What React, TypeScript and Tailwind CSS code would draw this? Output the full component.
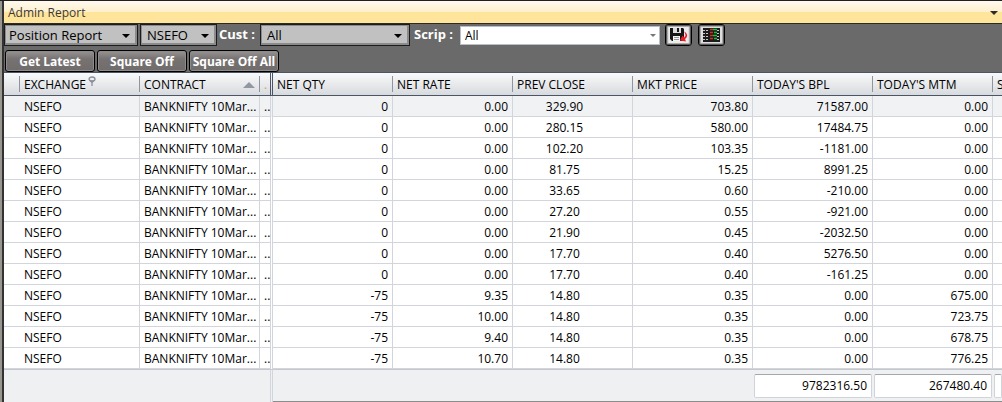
import React, { useState } from "react";
import clsx from "clsx";

interface Position {
  qty: string;
  rate: string;
  close: string;
  price: string;
  bpl: string;
  mtm: string;
}

const POSITIONS: Position[] = [
  { qty: "0", rate: "0.00", close: "329.90", price: "703.80", bpl: "71587.00", mtm: "0.00" },
  { qty: "0", rate: "0.00", close: "280.15", price: "580.00", bpl: "17484.75", mtm: "0.00" },
  { qty: "0", rate: "0.00", close: "102.20", price: "103.35", bpl: "-1181.00", mtm: "0.00" },
  { qty: "0", rate: "0.00", close: "81.75", price: "15.25", bpl: "8991.25", mtm: "0.00" },
  { qty: "0", rate: "0.00", close: "33.65", price: "0.60", bpl: "-210.00", mtm: "0.00" },
  { qty: "0", rate: "0.00", close: "27.20", price: "0.55", bpl: "-921.00", mtm: "0.00" },
  { qty: "0", rate: "0.00", close: "21.90", price: "0.45", bpl: "-2032.50", mtm: "0.00" },
  { qty: "0", rate: "0.00", close: "17.70", price: "0.40", bpl: "5276.50", mtm: "0.00" },
  { qty: "0", rate: "0.00", close: "17.70", price: "0.40", bpl: "-161.25", mtm: "0.00" },
  { qty: "-75", rate: "9.35", close: "14.80", price: "0.35", bpl: "0.00", mtm: "675.00" },
  { qty: "-75", rate: "10.00", close: "14.80", price: "0.35", bpl: "0.00", mtm: "723.75" },
  { qty: "-75", rate: "9.40", close: "14.80", price: "0.35", bpl: "0.00", mtm: "678.75" },
  { qty: "-75", rate: "10.70", close: "14.80", price: "0.35", bpl: "0.00", mtm: "776.25" },
];

const NUMBER_HEADS = ["NET QTY", "NET RATE", "PREV CLOSE", "MKT PRICE", "TODAY'S BPL", "TODAY'S MTM"];

function Arrow({ className }: { className: string }) {
  return (
    <svg viewBox="0 0 8 4" className={clsx("pointer-events-none absolute", className)} aria-hidden="true">
      <path d="M0 0h8L4 4z" fill="currentColor" />
    </svg>
  );
}

function Picker({ id, label, value, className, inset }: { id: string; label?: string; value: string; className: string; inset: string }) {
  return (
    <div className={clsx("relative shrink-0", className)}>
      <select
        id={id}
        aria-label={label}
        defaultValue={value}
        className={clsx(
          "block h-[22px] w-full appearance-none border border-[#1c1c1c] bg-[#c1c1c1] text-[13px] leading-5 text-black shadow-[inset_-1px_-1px_0_1px_#8b8b8b,inset_1px_1px_0_#8b8b8b] outline-none",
          inset
        )}
      >
        <option>{value}</option>
      </select>
      <Arrow className="right-2 top-[10px] h-1 w-2 text-black" />
    </div>
  );
}

function ToolButton({ children }: { children: React.ReactNode }) {
  return (
    <button
      type="button"
      className="h-[22px] w-[90px] shrink-0 whitespace-nowrap rounded-[3px] border border-black bg-linear-to-b from-[#999494] via-[#777272] via-40% to-[#716c6c] pt-px text-[12px] font-bold leading-5 text-white shadow-[inset_0_0_0_1px_#8f8b8b]"
    >
      {children}
    </button>
  );
}

function IconButton({ label, children }: { label: string; children: React.ReactNode }) {
  return (
    <button
      type="button"
      aria-label={label}
      className="flex h-[22px] w-[27px] shrink-0 items-center justify-center rounded-[3px] border border-black bg-[#dedede] shadow-[inset_0_0_0_1px_#5a5a5a,inset_0_0_0_2px_#a8a8a8]"
    >
      {children}
    </button>
  );
}

function SaveIcon() {
  return (
    <svg viewBox="0 0 19 16" className="h-4 w-[19px]" aria-hidden="true">
      <path d="M0 0h19v16H0z" fill="#ececec" />
      <path d="M1 1h13l1 1v12H3l-2-2z" fill="#151515" />
      <path d="M4 1h8v5H4z" fill="#dcdcdc" />
      <path d="M8 1h2v4H8z" fill="#151515" />
      <path d="M4 9h7v5H4z" fill="#f4f4f4" />
      <path d="M5 10.500h5M5 12.500h5" stroke="#999" />
      <path d="M15 4.500c4 2 4 5.500 1 7.500l1 2.500-6-1 2.500-5 1.500 2c2-1 2-3 0-6z" fill="#ee1c25" />
    </svg>
  );
}

function GridIcon() {
  return (
    <svg viewBox="0 0 19 14" className="h-[14px] w-[19px]" aria-hidden="true">
      <path d="M1 0h17v14H1z" fill="#1c1c1c" />
      <path d="M1 2.500h6M1 5.500h6M1 8.500h6M1 11.500h6M15 2.500h3M15 5.500h3M15 8.500h3M15 11.500h3" stroke="#c8c8c8" strokeDasharray="2 1" />
      <path d="M8 1.500h3M8 4.500h3M8 7.500h3M8 10.500h3" stroke="#d2301e" strokeWidth="1.500" />
      <path d="M11 1.500h4M12 4.500h3M11 7.500h4M12 10.500h3" stroke="#16c33a" strokeWidth="1.500" />
    </svg>
  );
}

function HeadCell({ children, last }: { children?: React.ReactNode; last?: boolean }) {
  return (
    <th className="p-0 text-left font-normal">
      <div className={clsx("flex h-4 items-center overflow-hidden pl-1 pt-0.5 leading-4", !last && "border-r border-[#8e959f]")}>
        {children}
      </div>
    </th>
  );
}

function Total({ label, value }: { label: string; value: string }) {
  return (
    <input
      readOnly
      aria-label={label}
      value={value}
      className="block h-6 w-full rounded-[2px] border border-[#d0d4da] border-t-[#a4a7ad] bg-white pr-1 text-right outline-none"
    />
  );
}

export default function App() {
  const [selected, setSelected] = useState(0);
  const cell = "border-b border-r border-[#d2d5db] p-0 px-1 pt-0.5 whitespace-nowrap overflow-hidden";

  return (
    <div className="flex min-h-screen overflow-hidden border-t border-[#231f20] bg-[#6a6a6a] font-['Open_Sans','Segoe_UI',sans-serif] text-black">
      <div className="w-1 shrink-0 border-r-2 border-[#333] bg-[#99968f]" />

      <div className="flex min-w-0 flex-1 flex-col">
        {/* Title bar */}
        <header className="flex h-[23px] items-center justify-between border-b border-[#2d2a26] bg-linear-to-b from-[#fffaf0] from-0% via-[#fff0cb] via-50% to-[#ffe49b] to-50% pl-1 pr-1 pt-0.5 text-[12px] text-[#3a3a3a]">
          <h1>Admin Report</h1>
          <svg viewBox="0 0 8 4" className="h-1 w-2" aria-hidden="true">
            <path d="M0 0h8L4 4z" fill="#2b2b2b" />
          </svg>
        </header>

        {/* Filters */}
        <div className="flex h-[22px] items-center text-[13px]">
          <Picker id="report" label="Report" value="Position Report" className="w-[134px]" inset="pl-1" />
          <Picker id="exchange" label="Exchange" value="NSEFO" className="ml-0.5 w-[77px]" inset="pl-1.5" />
          <label htmlFor="customer" className="w-[43px] shrink-0 pl-0.5 font-bold text-white">Cust :</label>
          <Picker id="customer" value="All" className="w-[150px]" inset="pl-1.5" />
          <label htmlFor="scrip" className="w-[50px] shrink-0 pl-1 font-bold text-white">Scrip :</label>
          <div className="relative w-[200px] shrink-0">
            <select id="scrip" defaultValue="All" className="block h-[19px] w-full appearance-none border border-[#b9bfc8] bg-white pl-1 pt-px text-[12px] leading-4 outline-none">
              <option>All</option>
            </select>
            <Arrow className="right-1 top-2 h-[3px] w-[6px] text-[#777]" />
          </div>
          <div className="flex gap-1.5 pl-[5px]">
            <IconButton label="Save layout"><SaveIcon /></IconButton>
            <IconButton label="Market watch"><GridIcon /></IconButton>
          </div>
        </div>

        <div className="flex gap-0.5 pl-px pt-1">
          <ToolButton>Get Latest</ToolButton>
          <ToolButton>Square Off</ToolButton>
          <ToolButton>Square Off All</ToolButton>
        </div>

        {/* Positions */}
        <div className="flex-1 overflow-hidden bg-[#eff0f2]">
          <table className="w-full table-fixed border-separate border-spacing-0 text-[12px] leading-4">
            <colgroup>
              <col className="w-4" />
              <col className="w-[120px]" />
              <col className="w-[120px]" />
              <col className="w-[10px]" />
              <col className="w-[3px]" />
              {NUMBER_HEADS.map((head) => (
                <col key={head} className="w-[120px]" />
              ))}
              <col />
            </colgroup>
            <thead className="bg-linear-to-b from-[#fafbfc] to-[#d6d9dd]">
              <tr className="h-6 [&>th]:border-b [&>th]:border-t [&>th]:border-[#4b5563]">
                <HeadCell />
                <HeadCell>
                  EXCHANGE
                  <svg viewBox="0 0 8 10" className="mb-2 ml-0.5 h-2.5 w-2 shrink-0" fill="none" stroke="#8a9099" strokeWidth="1.3" aria-hidden="true">
                    <ellipse cx="4" cy="3" rx="3" ry="2" />
                    <path d="M2 4.500l2 2 2-2M4 6v4" />
                  </svg>
                </HeadCell>
                <HeadCell>
                  CONTRACT
                  <svg viewBox="0 0 12 6" className="ml-auto mr-1 h-1.5 w-3 shrink-0" aria-hidden="true">
                    <path d="M0 6h12L6 0z" fill="#9298a1" />
                  </svg>
                </HeadCell>
                <HeadCell last><span className="text-[#d9a04a]">.</span></HeadCell>
                <th className="border-x border-[#4b5563] p-0" />
                {NUMBER_HEADS.map((head) => (
                  <HeadCell key={head}>{head}</HeadCell>
                ))}
                <HeadCell last>S</HeadCell>
              </tr>
            </thead>
            <tbody>
              {POSITIONS.map((row, i) => (
                <tr key={i} onClick={() => setSelected(i)} className={clsx("h-[21px]", i === selected ? "bg-[#f1f2f4]" : "bg-white")}>
                  <td className="border-b border-[#d2d5db] p-0" />
                  <td className={cell}>NSEFO</td>
                  <td className={cell}>BANKNIFTY 10Mar...</td>
                  <td className="overflow-hidden whitespace-nowrap border-b border-[#d2d5db] p-0 pl-1 pt-0.5">..</td>
                  <td className="border-x border-[#d2d5db] p-0" />
                  <td className={clsx(cell, "text-right")}>{row.qty}</td>
                  <td className={clsx(cell, "text-right")}>{row.rate}</td>
                  <td className={clsx(cell, "pr-5 text-center")}>{row.close}</td>
                  <td className={clsx(cell, "text-right")}>{row.price}</td>
                  <td className={clsx(cell, "text-right")}>{row.bpl}</td>
                  <td className={clsx(cell, "text-right")}>{row.mtm}</td>
                  <td className="border-b border-[#d2d5db] p-0" />
                </tr>
              ))}
            </tbody>
            <tfoot>
              <tr className="h-[33px] [&>td]:border-t [&>td]:border-t-[#c4c7cc]">
                <td colSpan={4} className="p-0" />
                <td className="border-x border-[#d2d5db] p-0" />
                <td colSpan={4} className="border-b border-b-[#8c8c8c] p-0" />
                <td className="border-b border-b-[#8c8c8c] p-0 px-px"><Total label="Total BPL" value="9782316.50" /></td>
                <td className="border-b border-b-[#8c8c8c] p-0 px-px"><Total label="Total MTM" value="267480.40" /></td>
                <td className="overflow-hidden border-b border-b-[#8c8c8c] p-0 pl-px"><Total label="Total" value="" /></td>
              </tr>
            </tfoot>
          </table>
        </div>
      </div>
    </div>
  );
}
